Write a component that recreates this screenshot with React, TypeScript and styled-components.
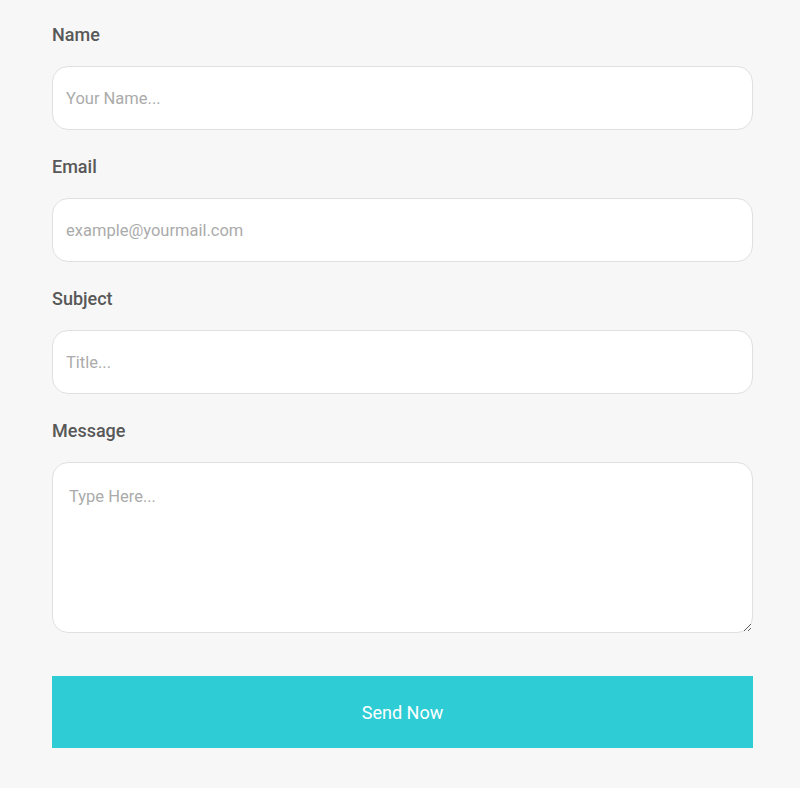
import styled, { createGlobalStyle } from 'styled-components';

const GlobalStyle = createGlobalStyle`
  html, body {
    margin: 0;
    padding: 0;
    background: #f7f7f7;
    font-family: Roboto, "Liberation Sans", sans-serif;
  }
`;

const fields = [
  { id: 'name', label: 'Name', placeholder: 'Your Name...' },
  { id: 'email', label: 'Email', placeholder: 'example@yourmail.com' },
  { id: 'subject', label: 'Subject', placeholder: 'Title...' },
];

const App: React.FC = () => {
  return (
    <>
      <GlobalStyle />
      <Form onSubmit={(e) => e.preventDefault()}>
        {fields.map((f) => (
          <Field key={f.id}>
            <Label htmlFor={f.id}>{f.label}</Label>
            <Input id={f.id} placeholder={f.placeholder} />
          </Field>
        ))}

        {/* message */}
        <Field>
          <Label htmlFor="message">Message</Label>
          <TextArea id="message" placeholder="Type Here..." />
        </Field>

        <SendButton type="submit">Send Now</SendButton>
      </Form>
    </>
  );
};

export default App;

/* ---------- styles ---------- */
const Form = styled.form`
  display: flex;
  flex-direction: column;
  gap: 27px;
  width: 701px;
  padding: 25px 0 40px 52px;
  box-sizing: content-box;
`;

const Field = styled.div`
  display: flex;
  flex-direction: column;
  gap: 21px;
`;

const Label = styled.label`
  font-size: 18px;
  line-height: 20px;
  font-weight: 500;
  color: #585858;
`;

const Input = styled.input`
  box-sizing: border-box;
  height: 64px;
  width: 100%;
  padding: 0 13px;
  border: 1px solid #e0e0e0;
  border-radius: 16px;
  background: #fff;
  font-family: inherit;
  font-size: 16.5px;
  color: #444;
  outline: none;

  &::placeholder {
    color: #ababab;
  }
`;

const TextArea = styled.textarea`
  box-sizing: border-box;
  height: 171px;
  width: 100%;
  padding: 24px 16px;
  border: 1px solid #e0e0e0;
  border-radius: 16px;
  background: #fff;
  font-family: inherit;
  font-size: 16.5px;
  color: #444;
  outline: none;
  resize: vertical;

  &::placeholder {
    color: #ababab;
  }
`;

const SendButton = styled.button`
  margin-top: 16px;
  height: 72px;
  width: 100%;
  border: none;
  background: #2ecdd6;
  color: #fff;
  font-family: inherit;
  font-size: 18px;
  cursor: pointer;
`;
